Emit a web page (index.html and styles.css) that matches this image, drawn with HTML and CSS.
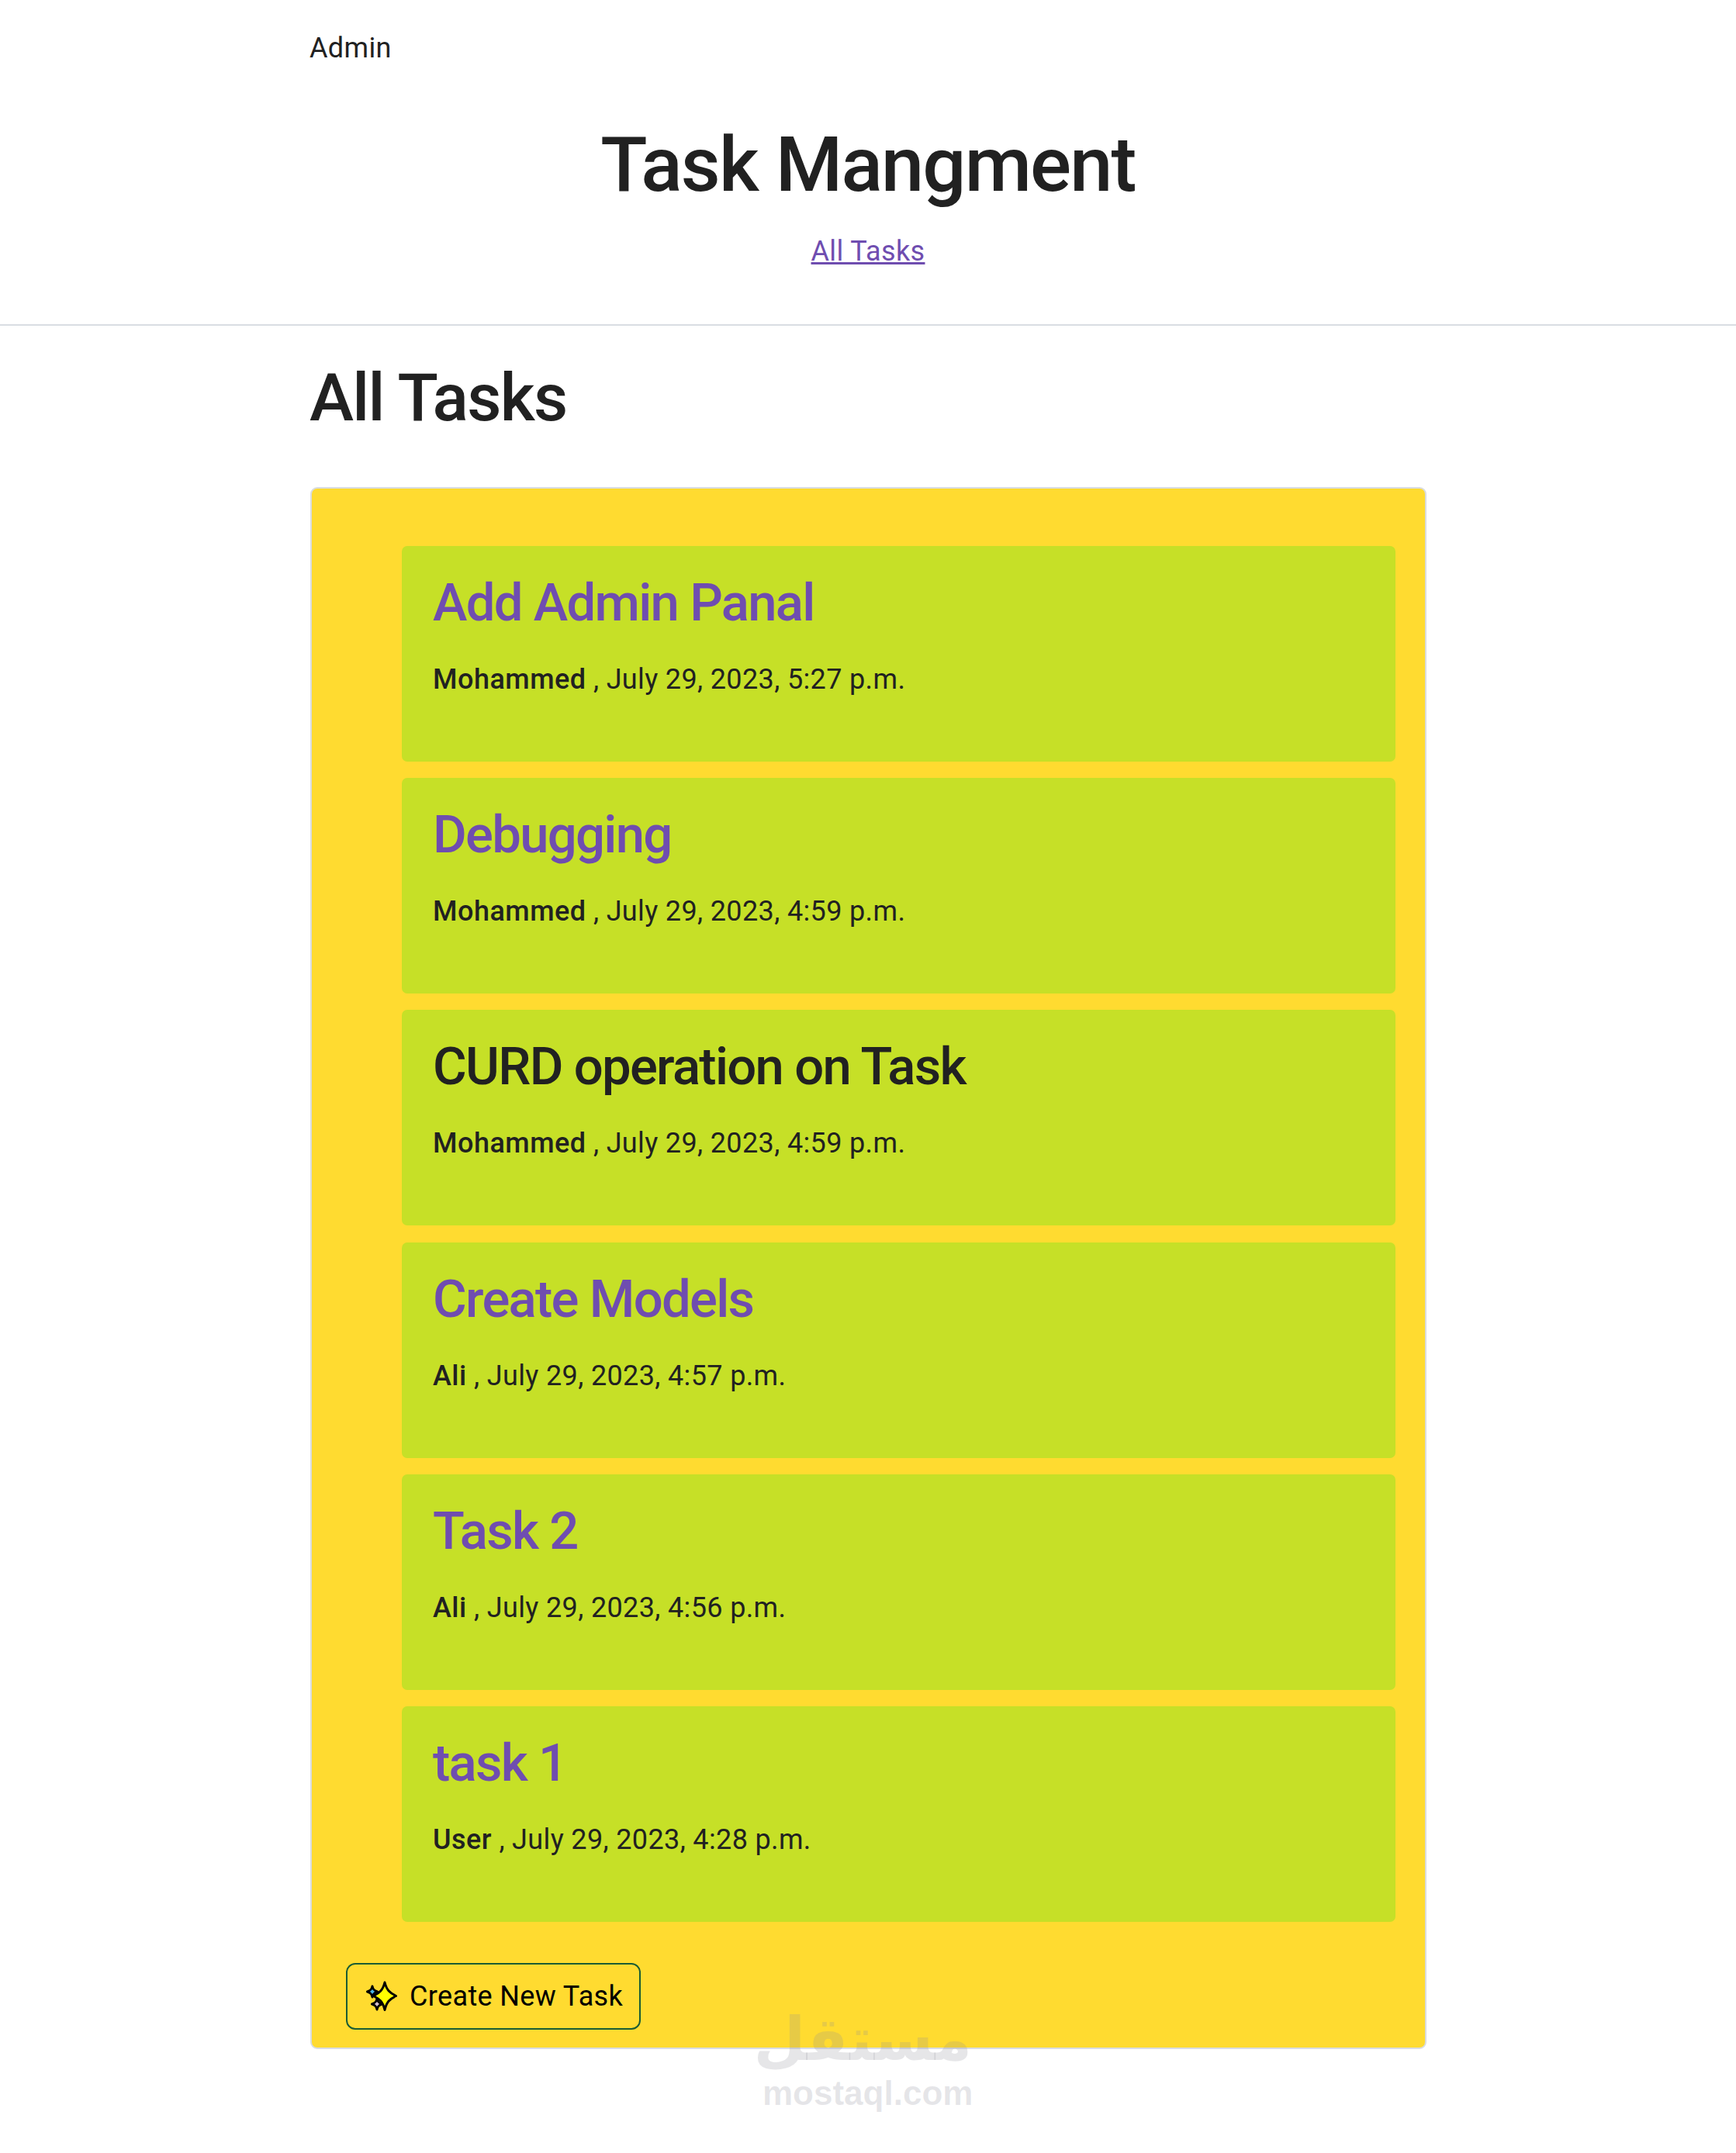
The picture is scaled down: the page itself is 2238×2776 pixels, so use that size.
FILE: index.html
```html
<!DOCTYPE html>
<html lang="en">
<head>
<meta charset="utf-8">
<title>Task Mangment</title>
<link rel="stylesheet" href="styles.css">
</head>
<body>
<header class="site-header">
  <nav class="topnav"><a class="nav-user" href="#">Admin</a></nav>
  <h1 class="site-title">Task Mangment</h1>
  <p class="site-links"><a href="#">All Tasks</a></p>
</header>
<main class="container">
  <h2 class="page-title">All Tasks</h2>
  <section class="card">
    <ul class="task-list">
      <li class="task"><h3 class="task-title"><a href="#">Add Admin Panal</a></h3><p class="task-meta"><strong>Mohammed</strong> , July 29, 2023, 5:27 p.m.</p></li>
      <li class="task"><h3 class="task-title"><a href="#">Debugging</a></h3><p class="task-meta"><strong>Mohammed</strong> , July 29, 2023, 4:59 p.m.</p></li>
      <li class="task"><h3 class="task-title">CURD operation on Task</h3><p class="task-meta"><strong>Mohammed</strong> , July 29, 2023, 4:59 p.m.</p></li>
      <li class="task"><h3 class="task-title"><a href="#">Create Models</a></h3><p class="task-meta"><strong>Ali</strong> , July 29, 2023, 4:57 p.m.</p></li>
      <li class="task"><h3 class="task-title"><a href="#">Task 2</a></h3><p class="task-meta"><strong>Ali</strong> , July 29, 2023, 4:56 p.m.</p></li>
      <li class="task"><h3 class="task-title"><a href="#">task 1</a></h3><p class="task-meta"><strong>User</strong> , July 29, 2023, 4:28 p.m.</p></li>
    </ul>
    <a class="btn-new" href="#">
      <svg class="sparkles" viewBox="0 0 42 40" aria-hidden="true">
        <path class="spark-big" d="M25 2C27.500 12 31.500 15.500 39.500 19.500 31.500 23.500 27.500 27 25 37.500 22.500 27 18.500 23.500 10.500 19.500 18.500 15.500 22.500 12 25 2Z"/>
        <path class="spark-blue" d="M9 7C9.800 11 11.200 12.500 15.500 14 11.200 15.500 9.800 17 9 21 8.200 17 6.800 15.500 2.500 14 6.800 12.500 8.200 11 9 7Z"/>
        <path class="spark-pink" d="M15 23C15.800 27 17.200 28.500 21.500 30 17.200 31.500 15.800 33 15 37 14.200 33 12.800 31.500 8.500 30 12.800 28.500 14.200 27 15 23Z"/>
      </svg>
      <span>Create New Task</span>
    </a>
  </section>
</main>
<div class="watermark" aria-hidden="true">
  <div class="wm-ar" dir="rtl" lang="ar">مستقل</div>
  <div class="wm-en">mostaql.com</div>
</div>
</body>
</html>
```
FILE: styles.css
```css
* { box-sizing: border-box; }
html, body { margin: 0; padding: 0; }
body {
  position: relative;
  min-height: 2776px;
  background: #fff;
  color: #212121;
  font-family: Roboto, "Liberation Sans", sans-serif;
  font-size: 36px;
  line-height: 54px;
  letter-spacing: 0.36px;
}
a { color: #6f4db0; }

.site-header {
  border-bottom: 2px solid #d9dde2;
  height: 420px;
  padding-top: 35px;
  text-align: center;
}
.topnav {
  width: 1440px;
  margin: 0 auto;
  text-align: left;
}
.nav-user { color: #212121; text-decoration: none; }
.site-title {
  margin: 69px 0 31px;
  font-size: 99px;
  line-height: 108px;
  font-weight: 500;
  letter-spacing: -1.8px;
}
.site-links { margin: 0; }

.container { width: 1440px; margin: 0 auto; }
.page-title {
  margin: 50px 0 72px;
  font-size: 86px;
  line-height: 86px;
  font-weight: 500;
  letter-spacing: -1.7px;
}
.card {
  height: 2014px;
  background: #ffdb30;
  border: 2px solid #d9dce0;
  border-radius: 9px;
  padding: 74px 38px 20px 44px;
  margin-left: 1px;
  width: 1439px;
}
.task-list {
  list-style: none;
  margin: 0 0 53px;
  padding: 0 0 0 72px;
  display: flex;
  flex-direction: column;
  gap: 21.2px;
}
.task {
  height: 278px;
  padding: 35px 40px 0;
  background: #c6e027;
  border-radius: 7px;
}
.task-title {
  margin: 0 0 34px;
  font-size: 67px;
  line-height: 76px;
  font-weight: 500;
  letter-spacing: -1.7px;
}
.task-title a { text-decoration: none; }
.task-meta { margin: 0; }
.task-meta strong { font-weight: 500; letter-spacing: 0.5px; }

.btn-new {
  display: inline-flex;
  align-items: center;
  gap: 15px;
  height: 86px;
  padding: 0 21px 0 23px;
  border: 2px solid #1a5c34;
  border-radius: 12px;
  color: #000;
  text-decoration: none;
}
.sparkles { width: 42px; height: 40px; flex: none; }
.sparkles path { stroke: #000; stroke-width: 3; stroke-linejoin: round; }
.spark-big { fill: #ffff00; }
.spark-blue { fill: #4ab4e6; }
.spark-pink { fill: #d8c0d0; }

.watermark {
  position: absolute;
  left: 983px;
  top: 2584px;
  width: 270px;
  text-align: center;
  color: rgba(140, 140, 150, 0.22);
  font-weight: 700;
  letter-spacing: 0;
}
.wm-ar {
  font-family: "DejaVu Sans", sans-serif;
  font-size: 77px;
  line-height: 92px;
}
.wm-en {
  font-family: "Liberation Sans", sans-serif;
  font-size: 44px;
  line-height: 46px;
}
```
